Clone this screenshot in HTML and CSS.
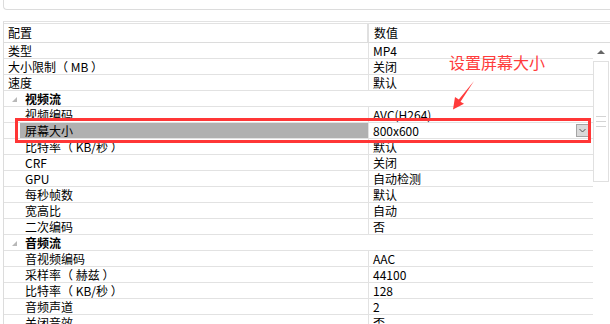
FILE: index.html
```html
<!DOCTYPE html>
<html lang="zh-CN">
<head>
  <meta charset="UTF-8">
  <title>属性设置</title>
  <link rel="stylesheet" href="styles.css">
</head>
<body>
  <div class="topbar"></div>

  <div class="grid">
    <div class="head">
      <div class="key">配置</div>
      <div class="val">数值</div>
    </div>

    <div class="body">
      <div class="rows">
        <div class="row"><div class="key">类型</div><div class="val">MP4</div></div>
        <div class="row"><div class="key">大小限制（ MB ）</div><div class="val">关闭</div></div>
        <div class="row"><div class="key">速度</div><div class="val">默认</div></div>

        <div class="row cat"><span class="tri"></span>视频流</div>
        <div class="row child"><div class="key">视频编码</div><div class="val">AVC(H264)</div></div>
        <div class="row child sel">
          <div class="key">屏幕大小</div>
          <div class="val">800x600
            <span class="drop">
              <svg width="9" height="9" viewBox="0 0 9 9"><path d="M1.5 3 L4.5 6 L7.5 3" fill="none" stroke="#555" stroke-width="1"/></svg>
            </span>
          </div>
        </div>
        <div class="row child"><div class="key">比特率（ KB/秒 ）</div><div class="val">默认</div></div>
        <div class="row child"><div class="key">CRF</div><div class="val">关闭</div></div>
        <div class="row child"><div class="key">GPU</div><div class="val">自动检测</div></div>
        <div class="row child"><div class="key">每秒帧数</div><div class="val">默认</div></div>
        <div class="row child"><div class="key">宽高比</div><div class="val">自动</div></div>
        <div class="row child"><div class="key">二次编码</div><div class="val">否</div></div>

        <div class="row cat"><span class="tri"></span>音频流</div>
        <div class="row child"><div class="key">音视频编码</div><div class="val">AAC</div></div>
        <div class="row child"><div class="key">采样率（ 赫兹 ）</div><div class="val">44100</div></div>
        <div class="row child"><div class="key">比特率（ KB/秒 ）</div><div class="val">128</div></div>
        <div class="row child"><div class="key">音频声道</div><div class="val">2</div></div>
        <div class="row child"><div class="key">关闭音效</div><div class="val">否</div></div>
      </div>

      <div class="scroll">
        <div class="up"></div>
        <div class="thumb"><i></i><i></i><i></i></div>
      </div>
    </div>
  </div>

  <!-- annotation over the grid -->
  <div class="mark"></div>
  <div class="note">设置屏幕大小</div>
  <svg class="arrow" width="610" height="324" viewBox="0 0 610 324">
    <polygon points="474,81 460.5,101.8 464,103.8 453,109.5 455,97 458.8,99.6" fill="#ff3b3b"/>
  </svg>
</body>
</html>
```

FILE: styles.css
```css
body {
  margin: 0;
  width: 610px;
  height: 324px;
  overflow: hidden;
  background: #fff;
  color: #000;
  font-family: "SimSun", "Noto Sans CJK SC", sans-serif;
  font-size: 12px;
  position: relative;
}

.topbar {
  height: 9px;
  margin-left: 3px;
  border-left: 1px solid #dcdcdc;
  border-bottom: 1px solid #dcdcdc;
  border-bottom-left-radius: 4px;
}

.grid {
  margin-top: 11px;
  margin-left: 3px;
  border-top: 1px solid #e2e2e2;
  border-left: 1px solid #dcdcdc;
  padding-top: 1px;
}

.head {
  display: flex;
  height: 18px;
  line-height: 18px;
  border-top: 1px solid #e2e2e2;
  border-bottom: 1px solid #dcdcdc;
}

.head .key {
  width: 365px;
  box-sizing: border-box;
  padding-left: 4px;
  border-right: 2px solid #e0e0e0;
}

.head .val {
  padding-left: 5px;
}

.body {
  display: flex;
}

.rows {
  width: 589px;
}

.row {
  display: flex;
  height: 15px;
  line-height: 15px;
  border-bottom: 1px solid #e2e2e2;
}

.row .key {
  width: 365px;
  box-sizing: border-box;
  padding-left: 4px;
  border-right: 1px solid #e2e2e2;
  white-space: nowrap;
}

.row .val {
  flex: 1;
  display: flex;
  align-items: center;
  padding-left: 4px;
}

.child .key {
  padding-left: 21px;
}

.sel .key {
  background: linear-gradient(to right, transparent 16px, #b0b0b0 16px);
}

.cat {
  align-items: center;
  padding-left: 8px;
  font-weight: bold;
}

.tri {
  width: 0;
  height: 0;
  border-left: 5px solid transparent;
  border-bottom: 5px solid #b8b8b8;
  margin-right: 8px;
  margin-top: 2px;
}

.drop {
  margin-left: auto;
  margin-right: 4px;
  width: 11px;
  height: 11px;
  border: 1px solid #a4a4a4;
  background: #d9d9d9;
  display: flex;
  align-items: center;
  justify-content: center;
}

.scroll {
  width: 17px;
  display: flex;
  flex-direction: column;
  padding-top: 7px;
}

.up {
  width: 0;
  height: 0;
  margin-left: 4px;
  border-left: 4px solid transparent;
  border-right: 4px solid transparent;
  border-bottom: 4px solid #666;
}

.thumb {
  margin-top: 7px;
  width: 14px;
  height: 119px;
  border: 1px solid #e0e0e0;
  display: flex;
  flex-direction: column;
  align-items: center;
  justify-content: center;
  gap: 4px;
}

.thumb i {
  display: block;
  width: 10px;
  height: 1px;
  background: #d4d4d4;
}

.mark {
  position: absolute;
  left: 15px;
  top: 118px;
  width: 576px;
  height: 25px;
  box-sizing: border-box;
  border: 3px solid #ff3636;
}

.note {
  position: absolute;
  left: 449px;
  top: 51px;
  font-family: "Noto Sans CJK SC", sans-serif;
  font-size: 16px;
  line-height: 22px;
  color: #ff3b3b;
}

.arrow {
  position: absolute;
  left: 0;
  top: 0;
  pointer-events: none;
}
```
